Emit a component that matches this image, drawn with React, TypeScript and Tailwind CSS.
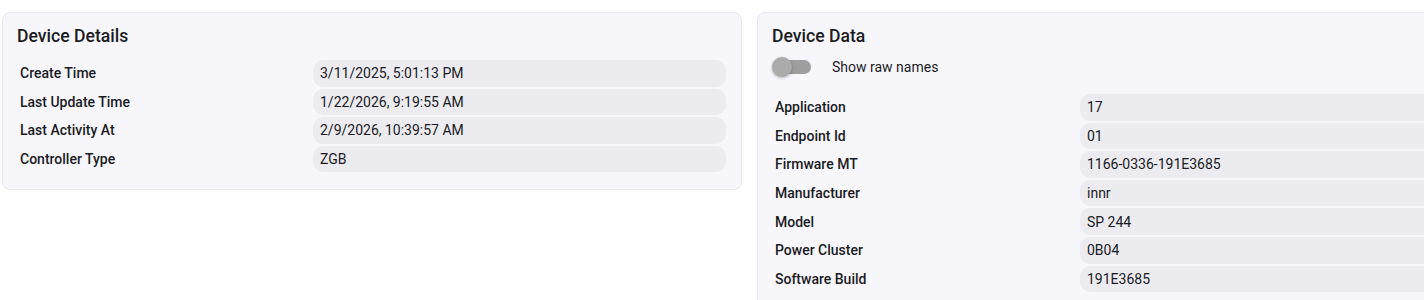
const details = [
  { label: "Create Time", value: "3/11/2025, 5:01:13 PM" },
  { label: "Last Update Time", value: "1/22/2026, 9:19:55 AM" },
  { label: "Last Activity At", value: "2/9/2026, 10:39:57 AM" },
  { label: "Controller Type", value: "ZGB" },
];

const deviceData = [
  { label: "Application", value: "17" },
  { label: "Endpoint Id", value: "01" },
  { label: "Firmware MT", value: "1166-0336-191E3685" },
  { label: "Manufacturer", value: "innr" },
  { label: "Model", value: "SP 244" },
  { label: "Power Cluster", value: "0B04" },
  { label: "Software Build", value: "191E3685" },
];

function Rows({ rows, labelWidth }: { rows: { label: string; value: string }[]; labelWidth: string }) {
  return (
    <div className="flex flex-col gap-[2px]">
      {rows.map((row) => (
        <div key={row.label} className="flex items-center h-[26.6px]">
          <div className={`${labelWidth} shrink-0 pl-[3px] text-sm font-medium text-[#1b1b1f]`}>{row.label}</div>
          <div className="flex-1 h-full flex items-center rounded-[10px] bg-[#ebebf0] px-[7px] text-sm text-[#1b1b1f]">
            {row.value}
          </div>
        </div>
      ))}
    </div>
  );
}

export default function App() {
  return (
    <div
      className="h-[300px] w-[1424px] overflow-hidden bg-white"
      style={{ fontFamily: "Roboto, 'Liberation Sans', sans-serif" }}
    >
      <div className="flex items-start gap-[15px] pl-[2px] pt-[12px]">
        <section className="w-[740px] shrink-0 rounded-lg border border-[#e8e8ee] bg-[#f7f7fb] pl-[14px] pr-[15px] pt-[11px] pb-[17px]">
          <h2 className="text-[17.6px] leading-6 font-medium text-[#1b1b1f] mb-3">Device Details</h2>
          <Rows rows={details} labelWidth="w-[296px]" />
        </section>

        <section className="w-[740px] shrink-0 rounded-lg border border-[#e8e8ee] bg-[#f7f7fb] pl-[14px] pr-[15px] pt-[11px] pb-[17px]">
          <h2 className="text-[17.6px] leading-6 font-medium text-[#1b1b1f]">Device Data</h2>
          <div className="flex items-center h-[38px] mb-2">
            <div className="relative w-[40px] h-[38px] shrink-0">
              <div className="absolute left-[5px] top-[12px] w-[34px] h-[14px] rounded-full bg-[#9e9e9e]" />
              <div className="absolute left-0 top-[9px] w-[20px] h-[20px] rounded-full bg-[#ababab] shadow-[0_1px_3px_rgba(0,0,0,0.3)]" />
            </div>
            <span className="ml-[20px] text-sm text-[#1b1b1f]">Show raw names</span>
          </div>
          <Rows rows={deviceData} labelWidth="w-[308px]" />
        </section>
      </div>
    </div>
  );
}
